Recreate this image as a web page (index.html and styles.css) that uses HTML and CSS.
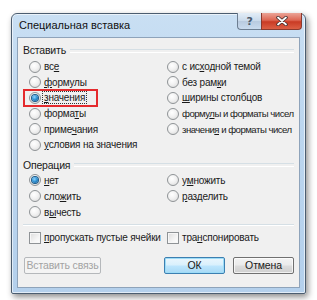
FILE: index.html
```html
<!DOCTYPE html>
<html lang="ru">
<head>
<meta charset="utf-8">
<title>Специальная вставка</title>
<link rel="stylesheet" href="styles.css">
</head>
<body>
<div class="window">
  <div class="titlebar">
    <span class="title">Специальная вставка</span>
    <div class="caption-buttons">
      <div class="cap-btn help">?</div>
      <div class="cap-btn close">
        <svg width="12" height="10" viewBox="0 0 12 10"><path d="M2 1.5 L10 8.5 M10 1.5 L2 8.5" stroke="#3b2a2a" stroke-width="3.4" stroke-linecap="round"/><path d="M2 1.5 L10 8.5 M10 1.5 L2 8.5" stroke="#ffffff" stroke-width="1.8" stroke-linecap="round"/></svg>
      </div>
    </div>
  </div>
  <div class="client">
    <div class="group-label"><span>Вставить</span></div>
    <div class="radio-grid rows6">
      <label class="opt"><span class="radio"></span><span>вс<u>е</u></span></label>
      <label class="opt"><span class="radio"></span><span>с ис<u>х</u>одной темой</span></label>
      <label class="opt"><span class="radio"></span><span><u>ф</u>ормулы</span></label>
      <label class="opt"><span class="radio"></span><span>без рам<u>к</u>и</span></label>
      <label class="opt marked"><span class="radio checked"></span><span class="focus"><u>з</u>начения</span><span class="highlight"></span></label>
      <label class="opt"><span class="radio"></span><span><u>ш</u>ирины столбцов</span></label>
      <label class="opt"><span class="radio"></span><span>форма<u>т</u>ы</span></label>
      <label class="opt"><span class="radio"></span><span class="tight">форму<u>л</u>ы и форматы чисел</span></label>
      <label class="opt"><span class="radio"></span><span>приме<u>ч</u>ания</span></label>
      <label class="opt"><span class="radio"></span><span class="tight">значени<u>я</u> и форматы чисел</span></label>
      <label class="opt"><span class="radio"></span><span><u>у</u>словия на значения</span></label>
      <span></span>
    </div>
    <div class="group-label op"><span>Операция</span></div>
    <div class="radio-grid rows3">
      <label class="opt"><span class="radio checked"></span><span><u>н</u>ет</span></label>
      <label class="opt"><span class="radio"></span><span>у<u>м</u>ножить</span></label>
      <label class="opt"><span class="radio"></span><span>сло<u>ж</u>ить</span></label>
      <label class="opt"><span class="radio"></span><span><u>р</u>азделить</span></label>
      <label class="opt"><span class="radio"></span><span>в<u>ы</u>честь</span></label>
      <span></span>
    </div>
    <div class="separator"></div>
    <div class="radio-grid rows1 checks">
      <label class="opt"><span class="check"></span><span><u>п</u>ропускать пустые ячейки</span></label>
      <label class="opt"><span class="check"></span><span>тра<u>н</u>спонировать</span></label>
    </div>
    <div class="buttons">
      <button class="btn disabled">Вставить связь</button>
      <div class="btn-pair">
        <button class="btn default">ОК</button>
        <button class="btn">Отмена</button>
      </div>
    </div>
  </div>
</div>
</body>
</html>
```
FILE: styles.css
```css
* { box-sizing: border-box; }
html, body { margin: 0; padding: 0; background: #ffffff; }
body {
  font-family: "Liberation Sans", Arial, sans-serif;
  font-size: 10px;
  letter-spacing: -0.2px;
  color: #1a1a1a;
  width: 317px;
  height: 300px;
  overflow: hidden;
}
u { text-decoration: underline; text-underline-offset: 1px; }

.window {
  margin: 13px 0 0 11px;
  width: 295px;
  height: 281px;
  border: 1px solid #4b5d70;
  border-radius: 6px 6px 2px 2px;
  background: linear-gradient(180deg, #c9dff3 0%, #bcd6ef 40%, #b4d0ec 100%);
  box-shadow: 2px 3px 6px rgba(0,0,0,0.45), inset 0 0 0 1px rgba(255,255,255,0.6);
  display: flex;
  flex-direction: column;
}

.titlebar {
  height: 23px;
  display: flex;
  align-items: flex-start;
  justify-content: space-between;
  padding-left: 7px;
}
.title {
  font-size: 11px;
  letter-spacing: 0;
  color: #111;
  margin-top: 5px;
}
.caption-buttons {
  display: flex;
  margin-right: 3px;
  margin-top: -1px;
}
.cap-btn {
  height: 17px;
  display: flex;
  align-items: center;
  justify-content: center;
  border: 1px solid #6d7e91;
  border-top: none;
}
.help {
  width: 24px;
  border-radius: 0 0 0 4px;
  border-right: none;
  background: linear-gradient(180deg, #e3edf7 0%, #c9d9ea 50%, #b8cadf 51%, #c9dbee 100%);
  color: #4b5a6a;
  font-weight: bold;
  font-size: 11px;
  font-family: "DejaVu Sans", sans-serif;
}
.close {
  width: 41px;
  border-radius: 0 0 4px 0;
  border-color: #8a3a2e;
  background: linear-gradient(180deg, #eba497 0%, #dd6652 45%, #c93b25 55%, #dc5f44 100%);
}

.client {
  flex: 1;
  margin: 0 5px 5px 5px;
  background: #f0f0f0;
  border: 1px solid #8ea3ba;
  padding: 5px 5px 0 5px;
  display: flex;
  flex-direction: column;
}

.group-label {
  display: flex;
  align-items: center;
  height: 14px;
  gap: 4px;
  font-size: 10.5px;
}
.group-label::after {
  content: "";
  flex: 1;
  height: 2px;
  border-top: 1px solid #d5dfe5;
  border-bottom: 1px solid #ffffff;
  margin-top: 1px;
}
.group-label.op { margin-top: 5px; }

.radio-grid {
  display: grid;
  grid-template-columns: 138px 1fr;
  padding-left: 6px;
  margin-top: 2px;
}
.rows6 { grid-template-rows: repeat(6, 15.6px); }
.rows3 { grid-template-rows: repeat(3, 15.8px); margin-top: 1px; }
.rows1 { grid-template-rows: 16px; }

.opt {
  display: flex;
  align-items: center;
  gap: 3px;
  white-space: nowrap;
  position: relative;
}
.tight {
  font-size: 9.6px;
  letter-spacing: -0.5px;
}

.radio {
  width: 12px;
  height: 12px;
  border-radius: 50%;
  border: 1px solid #8f9396;
  background: radial-gradient(circle at 40% 35%, #ffffff 0%, #f2f2f2 45%, #d6d6d6 100%);
  display: flex;
  align-items: center;
  justify-content: center;
  flex: none;
}
.radio.checked::after {
  content: "";
  width: 6px;
  height: 6px;
  border-radius: 50%;
  background: radial-gradient(circle at 40% 35%, #8fd4ff 0%, #2c8fd1 50%, #0d4f86 100%);
  box-shadow: 0 0 0 1px #1b5a8a;
}

.check {
  width: 12px;
  height: 12px;
  border: 1px solid #8f9396;
  background: linear-gradient(135deg, #dcdcdc 0%, #f4f4f4 60%, #ffffff 100%);
  box-shadow: inset 0 0 0 1px #f7f7f7;
  flex: none;
}

.focus {
  outline: 1px dotted #333;
  outline-offset: 0;
  padding: 0 1px;
  margin-left: -1px;
}

.highlight {
  position: absolute;
  left: -6px;
  top: -1px;
  width: 75px;
  height: 18px;
  border: 2px solid #e42a2d;
  pointer-events: none;
}

.separator {
  margin-top: 4px;
  height: 2px;
  border-top: 1px solid #d5dfe5;
  border-bottom: 1px solid #ffffff;
}
.checks { margin-top: 4px; }

.buttons {
  margin-top: 11px;
  display: flex;
  justify-content: space-between;
  padding-left: 1px;
}
.btn-pair { display: flex; gap: 8px; }
.btn {
  font-family: inherit;
  font-size: 10.5px;
  letter-spacing: -0.15px;
  white-space: nowrap;
  height: 17px;
  padding: 0;
  width: 61px;
  border: 1px solid #707070;
  border-radius: 2px;
  background: linear-gradient(180deg, #f3f3f3 0%, #ebebeb 48%, #dddddd 52%, #cfcfcf 100%);
  color: #1a1a1a;
  box-shadow: inset 0 0 0 1px rgba(255,255,255,0.7);
}
.btn.default {
  border-color: #3c7fb1;
  box-shadow: inset 0 0 0 1px #9ddcf7;
  background: linear-gradient(180deg, #eaf6fd 0%, #d9f0fc 48%, #bee6fd 52%, #a7d9f5 100%);
}
.btn.disabled {
  width: 77px;
  border-color: #b5b8bb;
  background: #f4f4f4;
  color: #a3a3a3;
  box-shadow: none;
}
```
